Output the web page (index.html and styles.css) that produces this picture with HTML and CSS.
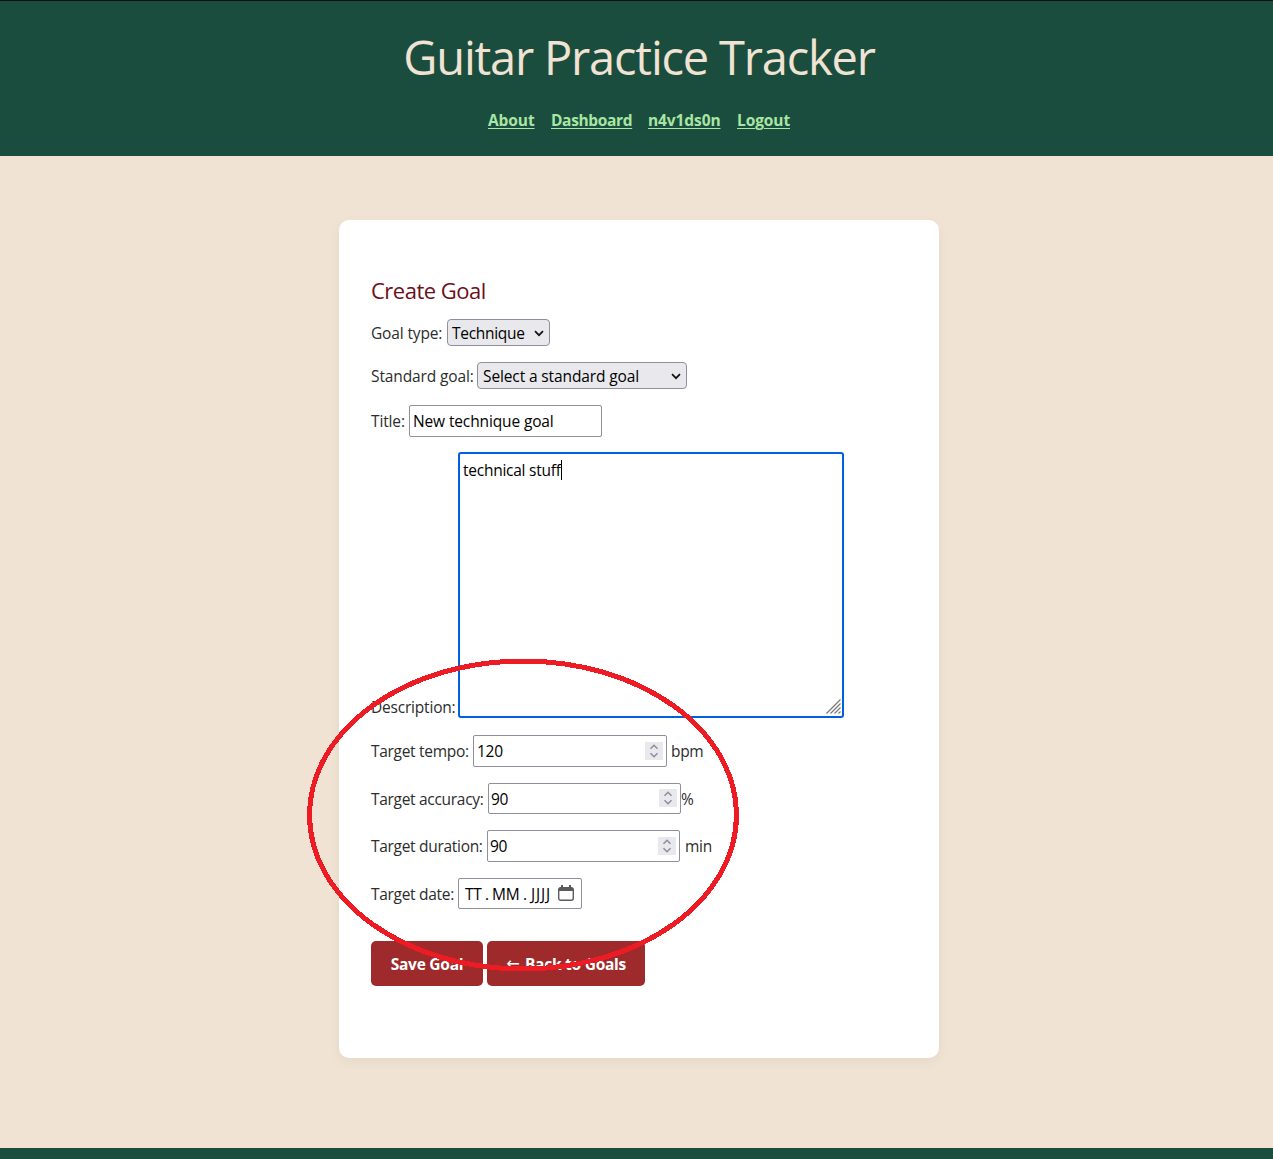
FILE: index.html
```html
<!DOCTYPE html>
<html lang="en">
<head>
<meta charset="utf-8">
<title>Guitar Practice Tracker</title>
<link rel="stylesheet" href="styles.css">
</head>
<body>
<div class="page">
  <header class="site-header">
    <h1><span>Guitar Practice Tracker</span></h1>
    <nav>
      <a class="about" href="#">About</a>
      <a class="dashboard" href="#">Dashboard</a>
      <a class="user" href="#">n4v1ds0n</a>
      <a class="logout" href="#">Logout</a>
    </nav>
  </header>
  <main>
    <form class="card">
      <h2>Create Goal</h2>
      <div class="row type">
        <label>Goal type:</label>
        <div class="select"><span>Technique</span><svg width="10" height="7" viewBox="0 0 10 7"><path d="M1 1.2 5 5.2 9 1.2"/></svg></div>
      </div>
      <div class="row standard">
        <label>Standard goal:</label>
        <div class="select"><span>Select a standard goal</span><svg width="10" height="7" viewBox="0 0 10 7"><path d="M1 1.2 5 5.2 9 1.2"/></svg></div>
      </div>
      <div class="row title">
        <label>Title:</label>
        <div class="input"><span>New technique goal</span></div>
      </div>
      <div class="row description">
        <label>Description:</label>
        <div class="textarea"><span>technical stuff</span><i class="caret"></i>
          <svg class="grip" width="15" height="15" viewBox="0 0 15 15"><path d="M.5 14.5 14.5.5M4.5 14.5l10-10M8.5 14.5l6-6M12.5 14.5l2-2"/></svg>
        </div>
      </div>
      <div class="row tempo">
        <label>Target tempo:</label>
        <div class="input"><span>120</span><svg class="spin" width="18" height="18" viewBox="0 0 18 18"><path d="M5.5 6.8 9 3.3l3.5 3.5M5.5 11.2 9 14.7l3.5-3.5"/></svg></div>
        <span class="unit">bpm</span>
      </div>
      <div class="row accuracy">
        <label>Target accuracy:</label>
        <div class="input"><span>90</span><svg class="spin" width="18" height="18" viewBox="0 0 18 18"><path d="M5.5 6.8 9 3.3l3.5 3.5M5.5 11.2 9 14.7l3.5-3.5"/></svg></div>
        <span class="unit">%</span>
      </div>
      <div class="row duration">
        <label>Target duration:</label>
        <div class="input"><span>90</span><svg class="spin" width="18" height="18" viewBox="0 0 18 18"><path d="M5.5 6.8 9 3.3l3.5 3.5M5.5 11.2 9 14.7l3.5-3.5"/></svg></div>
        <span class="unit">min</span>
      </div>
      <div class="row date">
        <label>Target date:</label>
        <div class="input"><span class="day">TT</span><span class="dot">.</span><span class="month">MM</span><span class="dot">.</span><span class="year">JJJJ</span>
          <svg class="calendar" width="16" height="16" viewBox="0 0 16 16"><path class="frame" d="M2.7 2.7h10.6a2 2 0 0 1 2 2v8.6a2 2 0 0 1-2 2H2.7a2 2 0 0 1-2-2V4.7a2 2 0 0 1 2-2z"/><path class="bar" d="M.7 6V4.5a2 2 0 0 1 2-2H3V0h2v2.5h6V0h2v2.5h.3a2 2 0 0 1 2 2V6z"/></svg>
        </div>
      </div>
      <div class="actions">
        <button type="button" class="save">Save Goal</button>
        <button type="button" class="back"><span class="arrow">←</span><span>Back to Goals</span></button>
      </div>
    </form>
  </main>
  <footer></footer>
  <svg class="ring" width="432" height="314" viewBox="0 0 432 314"><ellipse cx="216" cy="157" rx="213.5" ry="154"/></svg>
</div>
</body>
</html>
```
FILE: styles.css
```css
* { box-sizing: border-box; }
html { overflow: hidden; }
body { margin: 0; overflow: hidden; }

.page {
  position: relative;
  width: 1278px;
  height: 1159px;
  display: flex;
  flex-direction: column;
  background: #f0e3d3;
  color: #2c2c2c;
  font: 15.5px/22px "Open Sans", "Noto Sans", sans-serif;
  white-space: nowrap;
}

.site-header {
  height: 156px;
  flex: none;
  border-top: 1px solid #111;
  background: #1b4d3e;
  text-align: center;
}
h1 {
  margin: 24px 0 0;
  font-size: 47px;
  line-height: 64px;
  font-weight: 400;
  letter-spacing: -1.2px;
  color: #f0e3d3;
}
nav { display: flex; justify-content: center; gap: 16px; margin-top: 20px; }
nav a {
  color: #a8e6a3;
  font-weight: 700;
  letter-spacing: -0.1px;
  text-align: left;
  text-underline-offset: 2px;
  text-decoration-thickness: 1px;
}
.about { width: 47px; }
.dashboard { width: 81px; letter-spacing: -0.35px; }
.user { width: 73px; }
.logout { width: 53px; }

main { padding: 64px 0 90px; }
.card {
  width: 600px;
  height: 838px;
  margin: 0 auto;
  padding: 55px 32px 0;
  border-radius: 10px;
  background: #fff;
  box-shadow: 0 4px 12px rgba(0, 0, 0, .05);
}
h2 {
  margin: 0 0 14px;
  font-size: 22px;
  line-height: 30px;
  font-weight: 400;
  letter-spacing: -0.5px;
  color: #6b0f1a;
}

.row { display: flex; align-items: center; letter-spacing: -0.3px; }
.row label { flex: none; }
.select, .input {
  display: flex;
  align-items: center;
  justify-content: space-between;
  border: 1px solid #8f8f9d;
  color: #000;
}
.select { height: 27px; padding: 1px 5px 0; border-radius: 4px; background: #e9e9ed; }
.select svg { fill: none; stroke: #111; stroke-width: 1.7; }
.input { width: 193px; height: 32px; padding: 0 3px; border-radius: 2px; background: #fff; }
.unit { margin-left: 4px; }

.type { margin-bottom: 16px; }
.type label { width: 76px; letter-spacing: -0.15px; }
.type .select { width: 103px; padding-left: 4px; }
.standard { margin-bottom: 16px; letter-spacing: -0.12px; }
.standard label { width: 106px; }
.standard .select { width: 210px; }
.title { margin-bottom: 15px; letter-spacing: -0.13px; }
.title label { width: 38px; }
.description { align-items: flex-end; margin-bottom: 17px; }
.description label { width: 87px; letter-spacing: -0.2px; }
.textarea {
  position: relative;
  width: 386px;
  height: 266px;
  padding: 5px 3px;
  border: 2px solid #0060df;
  border-radius: 3px;
  color: #000;
  letter-spacing: -0.25px;
}
.caret { position: absolute; left: 101px; top: 6px; width: 1px; height: 20px; background: #000; }
.grip { position: absolute; right: 1px; bottom: 2px; stroke: #777; stroke-width: 1.2; }
.tempo { margin-bottom: 16px; }
.tempo label { width: 102px; }
.tempo .input { width: 194px; }
.accuracy { margin-bottom: 16px; }
.accuracy label { width: 117px; }
.accuracy .input { height: 31px; }
.accuracy .input, .duration .input { padding-left: 2px; }
.accuracy .unit { margin-left: 0; }
.accuracy .spin { margin-top: -2px; }
.duration { margin-bottom: 16px; }
.duration label { width: 116px; }
.duration .unit { margin-left: 5px; }
.spin { background: #e9e9ed; fill: none; stroke: #8f8f9d; stroke-width: 1.6; }
.date label { width: 87px; }
.date .input { width: 124px; height: 31px; padding: 0 7px 0 6px; justify-content: flex-start; }
.day { width: 20px; }
.dot { width: 7px; }
.month { width: 31px; }
.year { width: 27px; margin-left: 1px; letter-spacing: 0.8px; }
.calendar { margin-top: -2px; }
.frame { fill: none; stroke: #5b5b5b; stroke-width: 1.4; }
.bar { fill: #5b5b5b; }

.actions { display: flex; gap: 4px; margin-top: 32px; }
button {
  display: flex;
  align-items: center;
  justify-content: center;
  height: 45px;
  padding: 1px 0 0;
  border: 0;
  border-radius: 5px;
  background: #9e2a2b;
  color: #fff;
  font: 700 15.5px/22px "Open Sans", sans-serif;
  letter-spacing: -0.25px;
}
.save { width: 112px; }
.back { width: 158px; gap: 5px; }
.arrow { width: 14px; font: 400 16px/22px "DejaVu Sans", sans-serif; }

footer { flex: 1; background: #1b4d3e; }

.ring { position: absolute; left: 306.5px; top: 658px; fill: none; stroke: #ed1c24; stroke-width: 5; shape-rendering: crispEdges; }
```
